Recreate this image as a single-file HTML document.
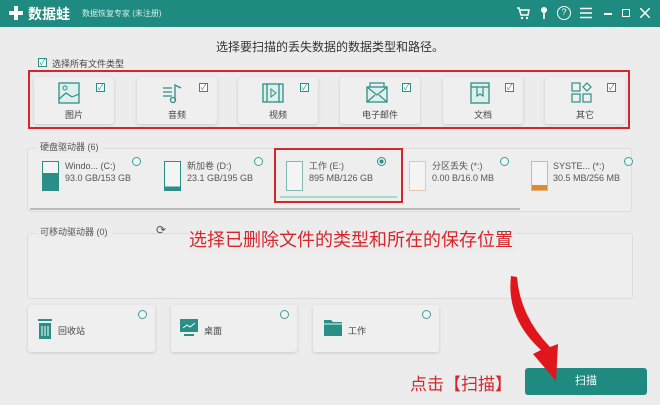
<!DOCTYPE html>
<html><head><meta charset="utf-8"><style>
*{margin:0;padding:0;box-sizing:border-box}
body{width:660px;height:405px;overflow:hidden;background:#ececec;font-family:"Liberation Sans","Noto Sans CJK SC",sans-serif;position:relative;color:#444}
.a{position:absolute}
.hd{left:0;top:0;width:660px;height:27px;background:#1f8a80}
.card{position:absolute;background:#efefef;border-radius:3px;box-shadow:0 1px 3px rgba(0,0,0,.15)}
.cb{position:absolute;width:9px;height:9px;border:1px solid #2a8f86;background:#fff;font-size:8px;line-height:7px;text-align:center;color:#2a8f86}
.lbl{position:absolute;font-size:9px;color:#444;width:100%;text-align:center;top:31px}
.rd{position:absolute;width:9px;height:9px;border:1px solid #3aa098;border-radius:50%;background:#f4f4f4}
.drv{position:absolute;top:160px;font-size:9px;line-height:12px;color:#555}
.di{position:absolute;width:17px;height:30px;border:1.5px solid}
.frame{position:absolute;border:1px solid #dcdcdc;border-radius:3px;background:#eeeeee}
</style></head><body>
<div class="a hd"></div>
<div class="a" style="left:8px;top:5px;width:16px;height:16px">
<svg width="16" height="16"><path d="M6 1h4v5h5v4h-5v5h-4v-5h-5v-4h5z" fill="#fff"/></svg></div>
<div class="a" style="left:28px;top:4px;color:#fff;font-size:14px;font-weight:bold">数据蛙</div>
<div class="a" style="left:82px;top:8px;color:#d8eeeb;font-size:8px">数据恢复专家 (未注册)</div>
<svg class="a" style="left:516px;top:6px" width="14" height="14"><path d="M1 2h2l2 7h7l1-5H4" fill="none" stroke="#fff" stroke-width="1.5"/><circle cx="6" cy="12" r="1.2" fill="#fff"/><circle cx="11" cy="12" r="1.2" fill="#fff"/></svg>
<svg class="a" style="left:539px;top:6px" width="10" height="14"><circle cx="5" cy="4" r="3" fill="#fff"/><path d="M5 7v6" stroke="#fff" stroke-width="1.6"/></svg>
<div class="a" style="left:557px;top:6px;width:14px;height:14px;border:1.5px solid #fff;border-radius:50%;color:#fff;font-size:9px;text-align:center;line-height:11px">?</div>
<svg class="a" style="left:580px;top:7px" width="12" height="12"><path d="M0 1.5h12M0 6h12M0 10.5h12" stroke="#fff" stroke-width="1.5"/></svg>
<div class="a" style="left:604px;top:13px;width:8px;height:1.5px;background:#fff"></div>
<div class="a" style="left:622px;top:9px;width:8px;height:8px;border:1.5px solid #fff"></div>
<svg class="a" style="left:640px;top:8px" width="10" height="10"><path d="M0 0L10 10M10 0L0 10" stroke="#fff" stroke-width="1.5"/></svg>

<div class="a" style="left:0;width:660px;top:38px;text-align:center;font-size:12px;color:#333">选择要扫描的丢失数据的数据类型和路径。</div>
<div class="cb" style="left:38px;top:58px">✓</div>
<div class="a" style="left:52px;top:57px;font-size:9px;color:#444">选择所有文件类型</div>
<div class="a" style="left:28px;top:70px;width:602px;height:59px;border:2px solid #d6262c"></div>

<div class="card" style="left:34px;top:77px;width:80px;height:47px"><svg class="a" style="left:24px;top:5px" width="22" height="22"><rect x="1" y="1" width="20" height="20" fill="#dff0ec" stroke="#2a8f86" stroke-width="1.3"/><path d="M1 17 L8 11 L14 15 L21 12" fill="none" stroke="#2a8f86" stroke-width="1.2"/><circle cx="7" cy="6" r="2" fill="none" stroke="#2a8f86"/></svg><div class="cb" style="left:62px;top:6px">✓</div><div class="lbl">图片</div></div>
<div class="card" style="left:137px;top:77px;width:80px;height:47px"><svg class="a" style="left:24px;top:5px" width="22" height="22"><path d="M2 6h9M2 10h9M2 14h9" stroke="#2a8f86" stroke-width="1.3"/><path d="M14 18V3l6 3" fill="none" stroke="#2a8f86" stroke-width="1.3"/><circle cx="12" cy="18" r="2.5" fill="none" stroke="#2a8f86" stroke-width="1.3"/></svg><div class="cb" style="left:62px;top:6px">✓</div><div class="lbl">音频</div></div>
<div class="card" style="left:238px;top:77px;width:80px;height:47px"><svg class="a" style="left:24px;top:5px" width="22" height="22"><rect x="1" y="2" width="20" height="18" fill="#dff0ec" stroke="#2a8f86" stroke-width="1.3"/><path d="M5 2v18M17 2v18" stroke="#2a8f86" stroke-width="1.3"/><path d="M9 7v8l5-4z" fill="none" stroke="#2a8f86"/></svg><div class="cb" style="left:62px;top:6px">✓</div><div class="lbl">视频</div></div>
<div class="card" style="left:340px;top:77px;width:80px;height:47px"><svg class="a" style="left:26px;top:5px" width="22" height="22"><rect x="1" y="5" width="20" height="15" fill="#dff0ec" stroke="#2a8f86" stroke-width="1.3"/><path d="M1 5l10 8 10-8M1 20l8-7M21 20l-8-7M4 5V1h14v4" fill="none" stroke="#2a8f86" stroke-width="1.2"/></svg><div class="cb" style="left:62px;top:6px">✓</div><div class="lbl">电子邮件</div></div>
<div class="card" style="left:443px;top:77px;width:80px;height:47px"><svg class="a" style="left:26px;top:5px" width="22" height="22"><rect x="2" y="1" width="18" height="20" fill="#dff0ec" stroke="#2a8f86" stroke-width="1.3"/><path d="M2 5h18M8 5v9l3-2 3 2V5" fill="none" stroke="#2a8f86" stroke-width="1.2"/></svg><div class="cb" style="left:62px;top:6px">✓</div><div class="lbl">文档</div></div>
<div class="card" style="left:545px;top:77px;width:80px;height:47px"><svg class="a" style="left:26px;top:5px" width="22" height="22"><rect x="1" y="1" width="8" height="8" fill="none" stroke="#2a8f86" stroke-width="1.2"/><path d="M16 1l4 4-4 4-4-4z" fill="none" stroke="#2a8f86" stroke-width="1.2"/><rect x="1" y="12" width="8" height="8" fill="none" stroke="#2a8f86" stroke-width="1.2"/><rect x="12" y="12" width="8" height="8" fill="none" stroke="#2a8f86" stroke-width="1.2"/></svg><div class="cb" style="left:62px;top:6px">✓</div><div class="lbl">其它</div></div>

<div class="frame" style="left:27px;top:148px;width:605px;height:64px"></div>
<div class="a" style="left:36px;top:140px;font-size:9px;color:#555;background:#ececec;padding:0 4px">硬盘驱动器 (6)</div>
<div class="a" style="left:30px;top:208px;width:490px;height:2px;background:#bbb"></div>

<div class="di" style="left:42px;top:161px;border-color:#2a8f86;background:linear-gradient(#f4f4f4 40%,#2a8f86 40%)"></div>
<div class="drv" style="left:65px">Windo... (C:)<br>93.0 GB/153 GB</div>
<div class="rd" style="left:132px;top:157px"></div>
<div class="di" style="left:164px;top:161px;border-color:#2a8f86;background:linear-gradient(#f4f4f4 88%,#2a8f86 88%)"></div>
<div class="drv" style="left:187px">新加卷 (D:)<br>23.1 GB/195 GB</div>
<div class="rd" style="left:254px;top:157px"></div>
<div class="di" style="left:286px;top:161px;border-color:#7fb8b2;background:#f4f4f4"></div>
<div class="drv" style="left:309px">工作 (E:)<br>895 MB/126 GB</div>
<div class="a" style="left:280px;top:196px;width:117px;height:2px;background:#a8dcc0"></div>
<div class="rd" style="left:377px;top:157px;border-color:#2a8f86;background:radial-gradient(#2a8f86 40%,#f4f4f4 45%)"></div>
<div class="a" style="left:274px;top:148px;width:129px;height:55px;border:2px solid #d6262c"></div>
<div class="di" style="left:409px;top:161px;border-color:#e8c8a8;background:#f4f4f4"></div>
<div class="drv" style="left:432px">分区丢失 (*:)<br>0.00 B/16.0 MB</div>
<div class="rd" style="left:500px;top:157px"></div>
<div class="di" style="left:531px;top:161px;border-color:#e8b080;background:linear-gradient(#f4f4f4 82%,#e08a30 82%)"></div>
<div class="drv" style="left:553px">SYSTE... (*:)<br>30.5 MB/256 MB</div>
<div class="rd" style="left:624px;top:157px"></div>

<div class="frame" style="left:27px;top:233px;width:606px;height:66px"></div>
<div class="a" style="left:36px;top:225px;font-size:9px;color:#555;background:#ececec;padding:0 4px">可移动驱动器 (0)</div>
<div class="a" style="left:156px;top:223px;font-size:12px;color:#555">⟳</div>
<div class="a" style="left:189px;top:226px;font-size:18px;color:#d6262c;white-space:nowrap;background:#ececec;padding-right:2px">选择已删除文件的类型和所在的保存位置</div>

<div class="card" style="left:28px;top:305px;width:127px;height:47px"><svg class="a" style="left:10px;top:14px" width="14" height="20"><rect x="0" y="0" width="14" height="2" fill="#2a8f86"/><rect x="5" y="-2" width="4" height="2" fill="#2a8f86"/><rect x="1" y="4" width="12" height="16" fill="#2a8f86"/><path d="M4 7v10M7 7v10M10 7v10" stroke="#fff"/></svg><div class="a" style="left:30px;top:19px;font-size:9px">回收站</div><div class="rd" style="left:110px;top:5px"></div></div>
<div class="card" style="left:171px;top:305px;width:126px;height:47px"><svg class="a" style="left:9px;top:14px" width="18" height="18"><rect x="0" y="0" width="18" height="13" fill="#2a8f86"/><path d="M3 9l4-3 3 2 5-4" stroke="#fff" fill="none"/><rect x="4" y="15" width="10" height="2" fill="#2a8f86"/></svg><div class="a" style="left:33px;top:19px;font-size:9px">桌面</div><div class="rd" style="left:109px;top:5px"></div></div>
<div class="card" style="left:313px;top:305px;width:126px;height:47px"><svg class="a" style="left:11px;top:15px" width="18" height="16"><path d="M0 0h7l2 2h9v14H0z" fill="#2a8f86"/><path d="M0 4h18" stroke="#e8f4f2" stroke-width="1"/></svg><div class="a" style="left:35px;top:19px;font-size:9px">工作</div><div class="rd" style="left:109px;top:5px"></div></div>

<div class="a" style="left:410px;top:370px;font-size:17px;color:#d6262c;white-space:nowrap">点击【扫描】</div>
<div class="a" style="left:525px;top:368px;width:122px;height:27px;background:#1f8a80;border-radius:3px;color:#fff;font-size:11px;text-align:center;line-height:27px">扫描</div>
<svg class="a" style="left:0;top:0" width="660" height="405"><path d="M511 276 Q506 318 541 350 L533 354 L556 381 L558 344 L550 347 Q520 316 517 277 Z" fill="#e0161c"/></svg>
</body></html>
